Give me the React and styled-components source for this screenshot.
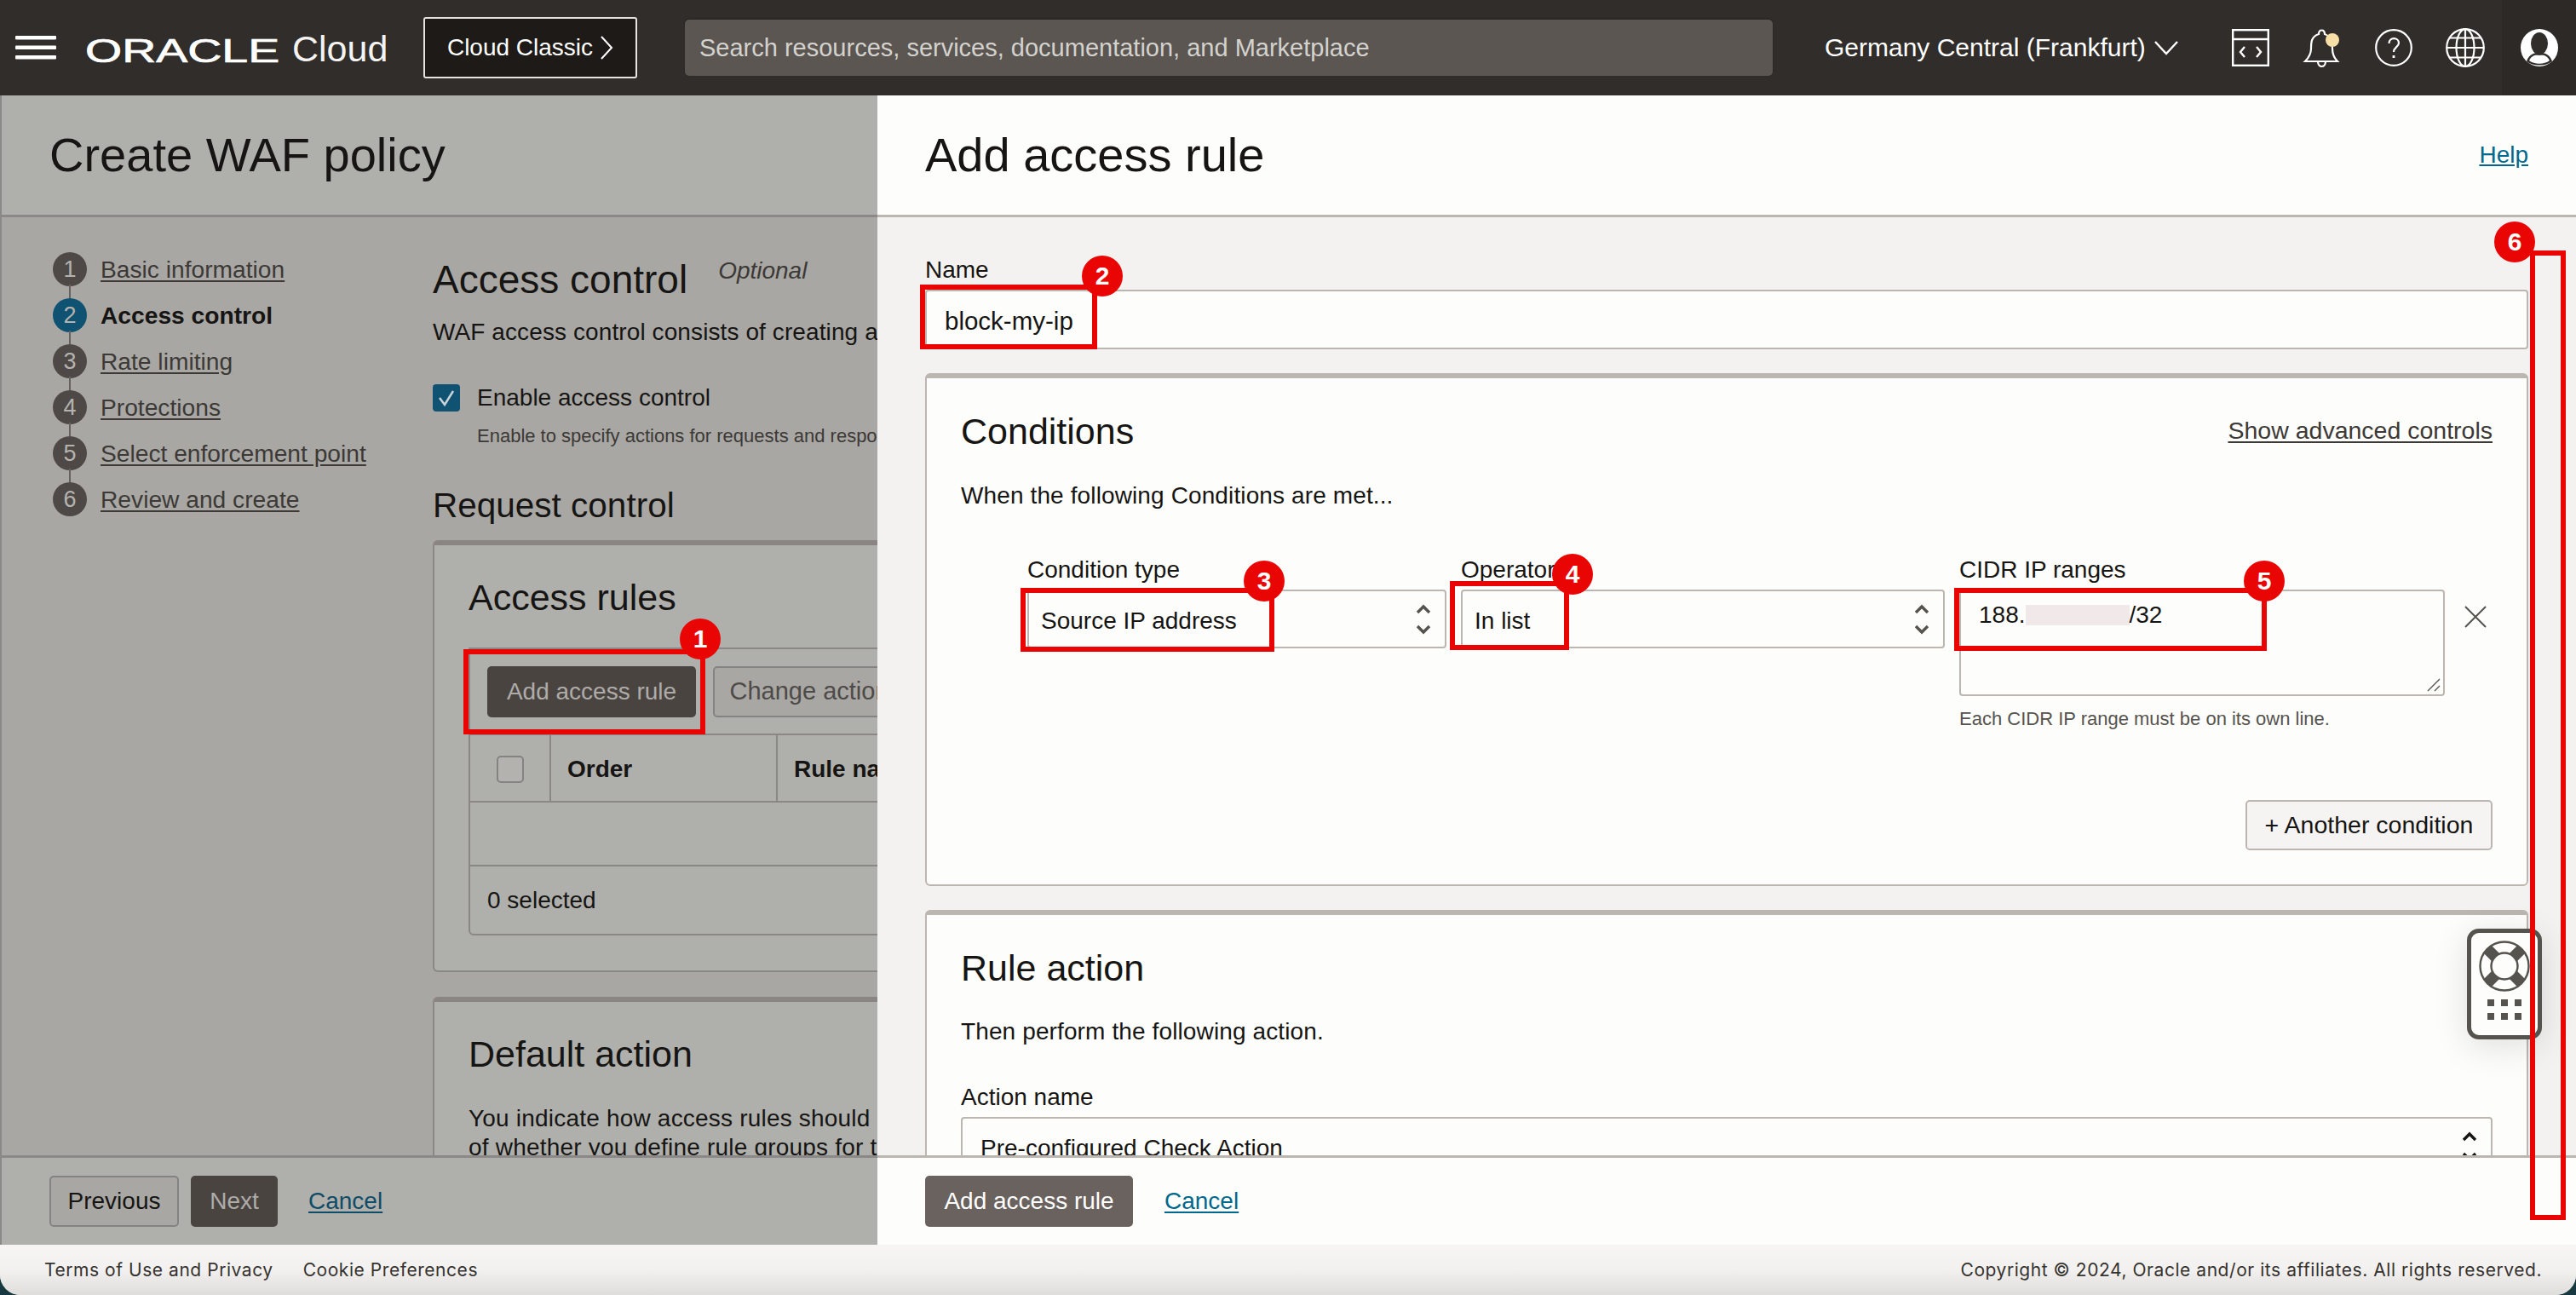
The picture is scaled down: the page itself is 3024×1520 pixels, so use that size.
import React from "react";
import styled, { createGlobalStyle } from "styled-components";

const GlobalStyle = createGlobalStyle`
  * { box-sizing: border-box; }
  html, body { margin: 0; padding: 0; background: #17393f; }
  body { font-family: "Liberation Sans", Arial, sans-serif; color: #161513; }
`;

const Shell = styled.div`
  position: relative;
  width: 3024px;
  height: 1520px;
  display: flex;
  flex-direction: column;
  overflow: hidden;
  border-radius: 0 0 24px 24px;
  background: #f5f4f2;
`;

/* top bar */
const TopBar = styled.header`
  height: 112px;
  flex: none;
  display: flex;
  align-items: center;
  background: #312d2a;
  color: #fff;
`;
const Burger = styled.svg`
  width: 48px;
  height: 30px;
  margin-left: 18px;
  flex: none;
`;
const Brand = styled.div`
  display: flex;
  align-items: center;
  margin-left: 34px;
  width: 397px;
  flex: none;
`;
const Wordmark = styled.span`
  display: inline-block;
  width: 228px;
  font-size: 38px;
  line-height: 38px;
  font-weight: 400;
  -webkit-text-stroke: 0.7px #fff;
  transform: scaleX(1.46);
  transform-origin: left center;
  margin-top: 8px;
`;
const CloudText = styled.span`
  font-size: 43px;
  margin-left: 15px;
  margin-top: 2px;
  color: #f4f3f1;
`;
const ClassicButton = styled.div`
  width: 251px;
  height: 72px;
  flex: none;
  display: flex;
  align-items: center;
  justify-content: center;
  gap: 8px;
  background: #1e1a17;
  border: 2px solid #e6e4e1;
  border-radius: 3px;
  font-size: 28px;
  margin-top: -1px;
`;
const SearchBox = styled.div`
  width: 1277px;
  height: 66px;
  flex: none;
  margin-left: 56px;
  padding-left: 17px;
  display: flex;
  align-items: center;
  background: #5b5651;
  border-radius: 5px;
  font-size: 29px;
  color: #d4d2ce;
  box-shadow: 0 -1px 2px #26221f;
`;
const Region = styled.div`
  margin-left: 61px;
  width: 458px;
  flex: none;
  display: flex;
  align-items: center;
  gap: 10px;
  font-size: 30px;
`;
const IconSlot = styled.div`
  width: 84px;
  flex: none;
  display: flex;
  justify-content: center;
  align-items: center;
`;
const ProfileSlot = styled.div`
  width: 87px;
  height: 112px;
  margin-left: auto;
  flex: none;
  background: #2c2926;
  display: flex;
  align-items: center;
  justify-content: center;
`;

/* panes */
const Panes = styled.div`
  flex: 1;
  min-height: 0;
  display: flex;
`;
const LeftPane = styled.section`
  width: 1030px;
  flex: none;
  display: flex;
  flex-direction: column;
  background: #a8a7a4;
  border-left: 2px solid #8a8987;
  overflow: hidden;
`;
const RightPane = styled.section`
  flex: 1;
  min-width: 0;
  display: flex;
  flex-direction: column;
  background: #f3f2f0;
  overflow: hidden;
`;
const PaneTitle = styled.div`
  height: 143px;
  flex: none;
  display: flex;
  align-items: center;
  justify-content: space-between;
  padding-left: ${(p) => p.$pad}px;
  padding-right: 56px;
  background: ${(p) => p.$bg};
  border-bottom: 3px solid ${(p) => p.$line};
`;
const PageHeading = styled.h1`
  margin: 0;
  font-size: 56px;
  line-height: 64px;
  font-weight: 400;
  white-space: nowrap;
`;
const HelpLink = styled.a`
  font-size: 28px;
  color: #00688c;
  text-decoration: underline;
`;

const LeftBody = styled.div`
  flex: 1;
  min-height: 0;
  display: flex;
  overflow: hidden;
`;
const StepList = styled.ol`
  width: 506px;
  flex: none;
  margin: 0;
  padding: 41px 0 0 60px;
  list-style: none;
`;
const StepItem = styled.li`
  position: relative;
  height: 54px;
  display: flex;
  align-items: flex-start;
  gap: 16px;
  font-size: 28.2px;
  line-height: 40px;
  &:not(:last-child)::before {
    content: "";
    position: absolute;
    left: 19px;
    top: 38px;
    width: 2px;
    height: 16px;
    background: #65615e;
  }
`;
const StepDot = styled.span`
  width: 40px;
  height: 40px;
  flex: none;
  border-radius: 50%;
  background: ${(p) => (p.$current ? "#0f5271" : "#4e4946")};
  color: #b5b3b0;
  text-align: center;
  font-size: 27px;
`;
const StepName = styled.span`
  color: ${(p) => (p.$current ? "#161513" : "#3c3936")};
  font-weight: ${(p) => (p.$current ? 700 : 400)};
  text-decoration: ${(p) => (p.$current ? "none" : "underline")};
  text-underline-offset: 3px;
  white-space: nowrap;
`;
const FormColumn = styled.div`
  width: 1300px;
  flex: none;
  padding-top: 49px;
`;
const HeadingRow = styled.div`
  display: flex;
  align-items: flex-start;
  gap: 36px;
`;
const SectionTitle = styled.h2`
  margin: ${(p) => p.$top || 0}px 0 0;
  font-size: ${(p) => p.$size || 43}px;
  line-height: 48px;
  font-weight: 400;
  white-space: nowrap;
`;
const OptionalTag = styled.em`
  font-size: 28px;
  line-height: 28px;
  color: #3c3936;
`;
const BodyText = styled.p`
  margin: ${(p) => p.$top}px 0 0;
  font-size: 28px;
  line-height: ${(p) => p.$line || 36}px;
  letter-spacing: ${(p) => p.$track || 0}px;
  white-space: nowrap;
`;
const CheckRow = styled.div`
  height: 32px;
  margin-top: 43px;
  display: flex;
  align-items: center;
  gap: 20px;
  font-size: 28px;
`;
const CheckBox = styled.span`
  width: 32px;
  height: 32px;
  border-radius: 4px;
  background: #0f5271;
  display: flex;
  align-items: center;
  justify-content: center;
`;
const HintText = styled.p`
  margin: ${(p) => p.$top}px 0 0 ${(p) => p.$indent || 0}px;
  font-size: 22px;
  line-height: 28px;
  color: ${(p) => p.$color || "#3c3936"};
  white-space: nowrap;
`;
const DimCard = styled.div`
  margin-top: ${(p) => p.$top}px;
  padding: 37px 40px 0;
  border: 2px solid #8a8785;
  border-top: 6px solid #8a8583;
  border-radius: 6px;
  background: #afafac;
  height: ${(p) => p.$height}px;
`;
const RuleTable = styled.div`
  margin-top: 35px;
  border: 2px solid #8a8785;
  border-radius: 0 0 6px 6px;
`;
const TableTools = styled.div`
  height: 101px;
  display: flex;
  align-items: center;
  gap: 20px;
  padding-left: 20px;
  border-bottom: 2px solid #8a8785;
`;
const DarkButton = styled.button`
  height: 60px;
  width: ${(p) => p.$width}px;
  flex: none;
  margin-left: ${(p) => p.$gap || 0}px;
  padding: 0;
  border: none;
  border-radius: 5px;
  background: ${(p) => p.$bg};
  color: ${(p) => p.$fg};
  font: 28px "Liberation Sans", Arial, sans-serif;
`;
const OutlineButton = styled.button`
  height: ${(p) => p.$height || 60}px;
  width: ${(p) => p.$width}px;
  flex: none;
  padding: 0;
  border: 2px solid ${(p) => p.$line};
  border-radius: 5px;
  background: ${(p) => p.$bg};
  color: ${(p) => p.$fg};
  font: ${(p) => p.$size || 28}px "Liberation Sans", Arial, sans-serif;
  white-space: nowrap;
`;
const HeaderRow = styled.div`
  height: 79px;
  display: flex;
  border-bottom: 2px solid #8a8785;
`;
const HeaderCell = styled.div`
  width: ${(p) => p.$width}px;
  flex: none;
  display: flex;
  align-items: center;
  justify-content: ${(p) => (p.$center ? "center" : "flex-start")};
  padding: 2px 0 0 ${(p) => (p.$center ? 0 : 19)}px;
  border-right: ${(p) => (p.$end ? "none" : "2px solid #8a8785")};
  font-size: 28px;
  font-weight: 700;
`;
const EmptyBox = styled.span`
  width: 32px;
  height: 32px;
  border: 2px solid #858381;
  border-radius: 5px;
  background: #b3b2af;
`;
const EmptyRow = styled.div`
  height: 75px;
  border-bottom: 2px solid #8a8785;
`;
const SelectedRow = styled.div`
  height: 79px;
  padding-left: 20px;
  display: flex;
  align-items: center;
  font-size: 28px;
`;
const ActionBar = styled.div`
  height: 105px;
  flex: none;
  display: flex;
  align-items: center;
  padding-left: ${(p) => p.$pad}px;
  padding-bottom: 1px;
  background: ${(p) => p.$bg};
  border-top: 3px solid ${(p) => p.$line};
`;
const CancelLink = styled.a`
  margin-left: ${(p) => p.$gap}px;
  font-size: 28px;
  color: ${(p) => p.$color};
  text-decoration: underline;
  text-underline-offset: 3px;
`;

/* right pane form */
const RightBody = styled.div`
  flex: 1;
  min-height: 0;
  padding: 46px 56px 0;
  overflow: hidden;
`;
const FieldLabel = styled.label`
  display: block;
  font-size: 28px;
  line-height: 32px;
  margin-top: ${(p) => p.$top || 0}px;
  margin-bottom: 7px;
  white-space: nowrap;
`;
const TextField = styled.div`
  height: ${(p) => p.$height || 70}px;
  display: flex;
  align-items: ${(p) => (p.$area ? "flex-start" : "center")};
  justify-content: space-between;
  position: relative;
  padding: ${(p) => (p.$area ? "12px 21px" : `4px 16px 0 ${p.$inset || 14}px`)};
  background: #fdfdfb;
  border: 2px solid #bcb6b1;
  border-radius: 4px;
  font-size: ${(p) => p.$size || 28}px;
  line-height: 32px;
`;
const FieldChevrons = styled.span`
  display: flex;
  margin-top: -4px;
`;
const FormCard = styled.div`
  margin-top: ${(p) => p.$top}px;
  padding: 38px 40px 40px;
  border: 2px solid #bcb6b1;
  border-top: 6px solid #bcb6b1;
  border-radius: 6px;
  background: #fdfdfb;
`;
const CardHead = styled.div`
  display: flex;
  align-items: center;
  justify-content: space-between;
  height: 48px;
`;
const PlainLink = styled.a`
  font-size: 28.5px;
  margin-top: -1px;
  color: #3c3936;
  text-decoration: underline;
  text-underline-offset: 3px;
`;
const ConditionRow = styled.div`
  margin: 53px 0 0 78px;
  display: grid;
  grid-template-columns: 492px 568px 570px 60px;
  column-gap: 17px;
  height: 286px;
`;
const RemoveCell = styled.div`
  padding-top: 58px;
  padding-left: 6px;
`;
const MaskedDigits = styled.span`
  display: inline-block;
  width: 122px;
  height: 24px;
  vertical-align: -3px;
  background: #f1e9e9;
`;
const GripMark = styled.svg`
  position: absolute;
  right: 2px;
  bottom: 2px;
  width: 18px;
  height: 18px;
`;
const RightAligned = styled.div`
  display: flex;
  justify-content: flex-end;
`;

/* site footer */
const SiteFooter = styled.footer`
  height: 59px;
  flex: none;
  display: flex;
  align-items: center;
  gap: 35px;
  padding: 0 40px 0 52px;
  background: linear-gradient(#f6f5f3, #f2f1ef 50%, #dedddb);
  font-family: Inter, "Liberation Sans", sans-serif;
  font-size: 21px;
  letter-spacing: 0.55px;
  color: #36322f;
`;
const FooterCopy = styled.span`
  margin-left: auto;
`;

/* overlays */
const RedFrame = styled.div`
  position: absolute;
  left: ${(p) => p.$x}px;
  top: ${(p) => p.$y}px;
  width: ${(p) => p.$w}px;
  height: ${(p) => p.$h}px;
  border: 6px solid #ea0505;
  pointer-events: none;
`;
const RedBadge = styled.div`
  position: absolute;
  left: ${(p) => p.$x - 24}px;
  top: ${(p) => p.$y - 24}px;
  width: 48px;
  height: 48px;
  border-radius: 50%;
  background: #ea0505;
  color: #fff;
  font-size: 30px;
  font-weight: 700;
  line-height: 48px;
  text-align: center;
`;
const HelpWidget = styled.div`
  position: absolute;
  left: 2896px;
  top: 1090px;
  width: 88px;
  height: 130px;
  display: flex;
  flex-direction: column;
  align-items: center;
  padding-top: 9px;
  gap: 9px;
  background: #fdfdfb;
  border: 5px solid #55534e;
  border-radius: 14px;
  box-shadow: 0 8px 40px rgba(0, 0, 0, 0.12);
`;

const Chevrons = ({ color = "#55534e" }) => (
  <FieldChevrons>
    <svg width="18" height="38" viewBox="0 0 18 38" fill="none" stroke={color} strokeWidth="3.4">
      <path d="M2 11 L9 4 L16 11" />
      <path d="M2 27 L9 34 L16 27" />
    </svg>
  </FieldChevrons>
);

const steps = [
  "Basic information",
  "Access control",
  "Rate limiting",
  "Protections",
  "Select enforcement point",
  "Review and create",
];

const frames = [
  { x: 544, y: 762, w: 284, h: 100 },
  { x: 1080, y: 334, w: 208, h: 76 },
  { x: 1198, y: 690, w: 298, h: 75 },
  { x: 1702, y: 682, w: 140, h: 81 },
  { x: 2294, y: 690, w: 367, h: 74 },
  { x: 2970, y: 294, w: 42, h: 1138 },
];

const badges = [
  { n: 1, x: 822, y: 750 },
  { n: 2, x: 1294, y: 324 },
  { n: 3, x: 1484, y: 682 },
  { n: 4, x: 1846, y: 674 },
  { n: 5, x: 2658, y: 682 },
  { n: 6, x: 2952, y: 284 },
];

const App = () => {
  return (
    <Shell>
      <GlobalStyle />
      <TopBar>
        <Burger viewBox="0 0 48 30">
          <g fill="#fff">
            <rect y="1" width="48" height="4.5" rx="1" />
            <rect y="12.5" width="48" height="4.5" rx="1" />
            <rect y="24" width="48" height="4.5" rx="1" />
          </g>
        </Burger>
        <Brand>
          <Wordmark>ORACLE</Wordmark>
          <CloudText>Cloud</CloudText>
        </Brand>
        <ClassicButton>
          Cloud Classic
          <svg width="16" height="28" viewBox="0 0 16 28" fill="none" stroke="#fff" strokeWidth="2">
            <path d="M2 1 L14 14 L2 27" />
          </svg>
        </ClassicButton>
        <SearchBox>Search resources, services, documentation, and Marketplace</SearchBox>
        <Region>
          Germany Central (Frankfurt)
          <svg width="28" height="18" viewBox="0 0 28 18" fill="none" stroke="#fff" strokeWidth="2.4">
            <path d="M1 2 L14 16 L27 2" />
          </svg>
        </Region>
        <IconSlot>
          <svg width="44" height="44" viewBox="0 0 44 44" fill="none" stroke="#fff" strokeWidth="2.4">
            <rect x="1.2" y="1.2" width="41.6" height="41.6" />
            <path d="M1 12 H43" />
            <path d="M15 21 L10 27 L15 33 M29 21 L34 27 L29 33" />
          </svg>
        </IconSlot>
        <IconSlot>
          <svg width="46" height="48" viewBox="0 0 46 48" fill="none">
            <path
              d="M19 8 C10 11 10 18 10 25 C10 32 7 36 3 40 H41 C37 36 35 32 35 25 C35 18 34 11 26 8 C26 2 19 2 19 8 Z"
              stroke="#fff"
              strokeWidth="2.2"
            />
            <path d="M18 40 C18 48 27 48 27 40" stroke="#fff" strokeWidth="2.2" />
            <ellipse cx="35" cy="15" rx="8" ry="8" fill="#f7dfa5" />
          </svg>
        </IconSlot>
        <IconSlot>
          <svg width="44" height="44" viewBox="0 0 44 44" fill="none" stroke="#fff" strokeWidth="2.2">
            <circle cx="22" cy="22" r="20.8" />
            <path d="M16.5 17 C16.5 9 28 9.5 28 16.5 C28 21 22 21.5 22 27" />
            <path d="M22 31 V34" strokeWidth="2.8" />
          </svg>
        </IconSlot>
        <IconSlot>
          <svg width="46" height="46" viewBox="0 0 46 46" fill="none" stroke="#fff" strokeWidth="2.2">
            <circle cx="23" cy="23" r="21.8" />
            <ellipse cx="23" cy="23" rx="10.5" ry="21.8" />
            <path d="M23 1 V45 M1 23 H45 M5 11.5 H41 M5 34.5 H41" />
          </svg>
        </IconSlot>
        <ProfileSlot>
          <svg width="44" height="44" viewBox="0 0 44 44">
            <circle cx="22" cy="22" r="22" fill="#fff" />
            <ellipse cx="22" cy="17" rx="10" ry="13" fill="#312d2a" />
            <path d="M7 38 C10 29 16 28 22 28 C28 28 34 29 37 38 C30 44 14 44 7 38 Z" fill="#312d2a" />
            <path d="M10 37 C13 31 17 30 22 31 C27 30 31 31 34 37 C28 42 16 42 10 37 Z" fill="#fff" />
          </svg>
        </ProfileSlot>
      </TopBar>

      <Panes>
        <LeftPane>
          <PaneTitle $pad={56} $bg="#afafac" $line="#8a8987">
            <PageHeading>Create WAF policy</PageHeading>
          </PaneTitle>
          <LeftBody>
            <StepList>
              {steps.map((name, i) => (
                <StepItem key={name}>
                  <StepDot $current={i === 1}>{i + 1}</StepDot>
                  <StepName $current={i === 1}>{name}</StepName>
                </StepItem>
              ))}
            </StepList>
            <FormColumn>
              <HeadingRow>
                <SectionTitle $size={46}>Access control</SectionTitle>
                <OptionalTag>Optional</OptionalTag>
              </HeadingRow>
              <BodyText $top={20} $track={0.1}>WAF access control consists of creating access rules and a default action.</BodyText>
              <CheckRow>
                <CheckBox>
                  <svg width="22" height="22" viewBox="0 0 22 22" fill="none" stroke="#c9d3d8" strokeWidth="2.5">
                    <path d="M3 11 L9 19 L19 3" />
                  </svg>
                </CheckBox>
                Enable access control
              </CheckRow>
              <HintText $top={15} $indent={52}>
                Enable to specify actions for requests and responses that match the conditions.
              </HintText>
              <SectionTitle $top={43} $size={40.5}>Request control</SectionTitle>
              <DimCard $top={17} $height={507}>
                <SectionTitle>Access rules</SectionTitle>
                <RuleTable>
                  <TableTools>
                    <DarkButton $width={245} $bg="#4a4441" $fg="#aeaca9">Add access rule</DarkButton>
                    <OutlineButton $width={226} $size={29} $line="#858381" $bg="#a8a7a4" $fg="#4e4a47">Change action</OutlineButton>
                  </TableTools>
                  <HeaderRow>
                    <HeaderCell $width={95} $center><EmptyBox /></HeaderCell>
                    <HeaderCell $width={266}>Order</HeaderCell>
                    <HeaderCell $width={400} $end>Rule name</HeaderCell>
                  </HeaderRow>
                  <EmptyRow />
                  <SelectedRow>0 selected</SelectedRow>
                </RuleTable>
              </DimCard>
              <DimCard $top={29} $height={400}>
                <SectionTitle>Default action</SectionTitle>
                <BodyText $top={35} $line={34} $track={0.2}>You indicate how access rules should</BodyText>
                <BodyText $top={0} $line={34} $track={0.2}>of whether you define rule groups for the policy.</BodyText>
              </DimCard>
            </FormColumn>
          </LeftBody>
          <ActionBar $pad={56} $bg="#afafac" $line="#8a8987">
            <OutlineButton $width={152} $line="#858381" $bg="#a8a7a4" $fg="#161513">Previous</OutlineButton>
            <DarkButton $width={102} $gap={14} $bg="#4a4441" $fg="#aeaca9">Next</DarkButton>
            <CancelLink $gap={36} $color="#0f4c68">Cancel</CancelLink>
          </ActionBar>
        </LeftPane>

        <RightPane>
          <PaneTitle $pad={56} $bg="#fdfdfb" $line="#bcb6b1">
            <PageHeading>Add access rule</PageHeading>
            <HelpLink>Help</HelpLink>
          </PaneTitle>
          <RightBody>
            <FieldLabel>Name</FieldLabel>
            <TextField $size={29.5} $inset={21}>block-my-ip</TextField>

            <FormCard $top={28}>
              <CardHead>
                <SectionTitle>Conditions</SectionTitle>
                <PlainLink>Show advanced controls</PlainLink>
              </CardHead>
              <BodyText $top={34} $track={0.12}>When the following Conditions are met...</BodyText>
              <ConditionRow>
                <div>
                  <FieldLabel>Condition type</FieldLabel>
                  <TextField $height={69}>
                    Source IP address
                    <Chevrons />
                  </TextField>
                </div>
                <div>
                  <FieldLabel>Operator</FieldLabel>
                  <TextField $height={69}>
                    In list
                    <Chevrons />
                  </TextField>
                </div>
                <div>
                  <FieldLabel>CIDR IP ranges</FieldLabel>
                  <TextField $height={125} $area>
                    <span>
                      188.<MaskedDigits />/32
                    </span>
                    <GripMark viewBox="0 0 18 18" fill="none" stroke="#55534e" strokeWidth="1.4">
                      <path d="M2 16 L16 2 M10 16 L16 10" />
                    </GripMark>
                  </TextField>
                  <HintText $top={13} $color="#55534e">Each CIDR IP range must be on its own line.</HintText>
                </div>
                <RemoveCell>
                  <svg width="26" height="26" viewBox="0 0 26 26" fill="none" stroke="#55534e" strokeWidth="2">
                    <path d="M1 1 L25 25 M25 1 L1 25" />
                  </svg>
                </RemoveCell>
              </ConditionRow>
              <RightAligned>
                <OutlineButton $width={290} $height={59} $size={28.5} $line="#bcb6b1" $bg="#f5f4f2" $fg="#161513">
                  + Another condition
                </OutlineButton>
              </RightAligned>
            </FormCard>

            <FormCard $top={28}>
              <SectionTitle>Rule action</SectionTitle>
              <BodyText $top={33} $track={0.12}>Then perform the following action.</BodyText>
              <FieldLabel $top={43}>Action name</FieldLabel>
              <TextField $height={69} $inset={21}>
                Pre-configured Check Action
                <Chevrons color="#161513" />
              </TextField>
            </FormCard>
          </RightBody>
          <ActionBar $pad={56} $bg="#fdfdfb" $line="#bcb6b1">
            <DarkButton $width={244} $bg="#6a625e" $fg="#fff">Add access rule</DarkButton>
            <CancelLink $gap={37} $color="#00688c">Cancel</CancelLink>
          </ActionBar>
        </RightPane>
      </Panes>

      <SiteFooter>
        <span>Terms of Use and Privacy</span>
        <span>Cookie Preferences</span>
        <FooterCopy>Copyright © 2024, Oracle and/or its affiliates. All rights reserved.</FooterCopy>
      </SiteFooter>

      <HelpWidget>
        <svg width="60" height="60" viewBox="0 0 60 60">
          <defs>
            <clipPath id="buoy-edge">
              <circle cx="30" cy="30" r="29" />
            </clipPath>
          </defs>
          <g clipPath="url(#buoy-edge)" stroke="#55534e" strokeWidth="13">
            <path d="M8 8 L52 52 M52 8 L8 52" />
          </g>
          <circle cx="30" cy="30" r="28.5" fill="none" stroke="#55534e" strokeWidth="2.4" />
          <circle cx="30" cy="30" r="15.5" fill="#fdfdfb" stroke="#55534e" strokeWidth="2.4" />
        </svg>
        <svg width="40" height="24" viewBox="0 0 40 24" fill="#55534e">
          {[0, 16].map((y) => [0, 16, 32].map((x) => <rect key={`${x}-${y}`} x={x} y={y} width="8" height="8" />))}
        </svg>
      </HelpWidget>

      {frames.map((f) => (
        <RedFrame key={f.x} $x={f.x} $y={f.y} $w={f.w} $h={f.h} />
      ))}
      {badges.map((b) => (
        <RedBadge key={b.n} $x={b.x} $y={b.y}>{b.n}</RedBadge>
      ))}
    </Shell>
  );
};

export default App;
